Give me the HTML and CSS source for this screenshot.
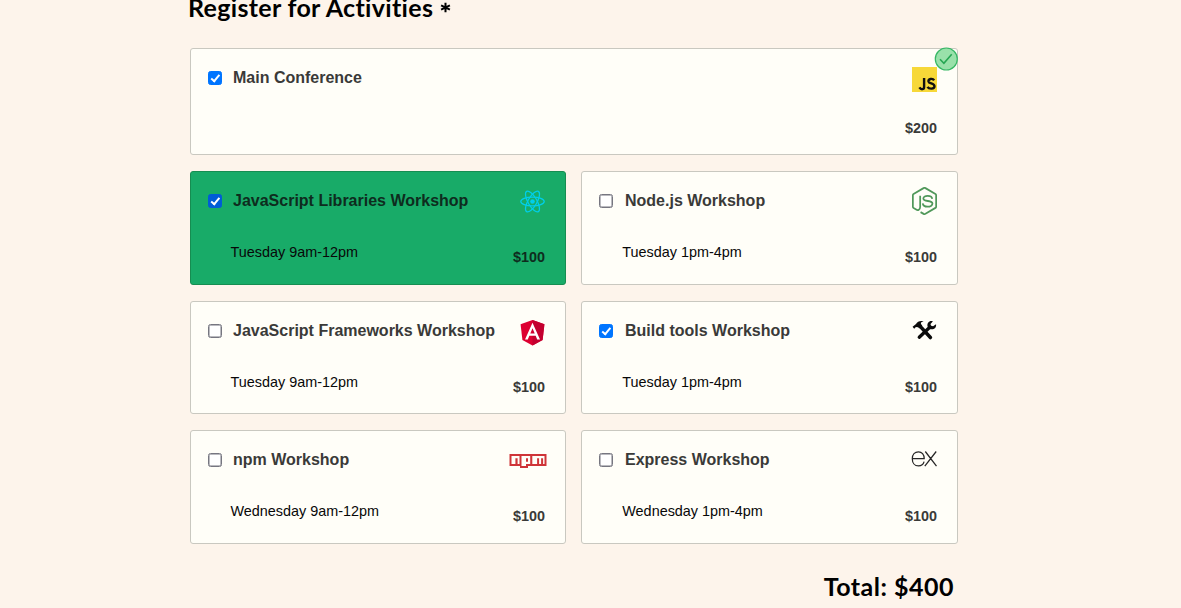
FILE: index.html
```html
<!DOCTYPE html>
<html lang="en">
<head>
<meta charset="utf-8">
<title>Register for Activities</title>
<link rel="stylesheet" href="styles.css">
</head>
<body>
<form class="activities">
  <h2 class="heading"><span>Register for Activities</span> <svg class="star" viewBox="0 0 12 12"><path d="M6 .8v10.4M1.2 3.6l9.6 4.8M10.8 3.6L1.2 8.4"/></svg></h2>
  <div class="grid">
    <label class="card main">
      <input type="checkbox" checked>
      <span class="title">Main Conference</span>
      <svg class="icon js" width="25" height="25" viewBox="0 0 25 25"><path fill="#f7d838" d="M0 0h25v25H0z"/><g fill="none" stroke="#111" stroke-width="2.4"><path d="M12.1 11v9c0 2.8-3.2 2.9-4.7.3"/><path d="M22.1 13.4c-1.3-2.4-6-1.8-5.6 1.1.4 2.4 6 1.6 6 4.8 0 3-5.5 3.1-7 .5"/></g></svg>
      <span class="cost">$200</span>
      <svg class="badge" width="24" height="24" viewBox="0 0 24 24"><circle cx="12.3" cy="12" r="11" fill="#99e1aa" stroke="#37b765" stroke-width="1.2"/><path d="M6 12.2l3.9 4 7.8-8.9" fill="none" stroke="#26a653" stroke-width="1.6"/></svg>
    </label>

    <label class="card focus">
      <input type="checkbox" checked>
      <span class="title">JavaScript Libraries Workshop</span>
      <svg class="icon" width="25" height="25" viewBox="0 0 26 26"><g fill="none" stroke="#00cfeb" stroke-width="1.3"><ellipse cx="13" cy="13" rx="12.2" ry="4.6"/><ellipse cx="13" cy="13" rx="12.2" ry="4.6" transform="rotate(60 13 13)"/><ellipse cx="13" cy="13" rx="12.2" ry="4.6" transform="rotate(120 13 13)"/></g><circle cx="13" cy="13" r="2.4" fill="#00cfeb"/></svg>
      <span class="time">Tuesday 9am-12pm</span>
      <span class="cost">$100</span>
    </label>

    <label class="card">
      <input type="checkbox">
      <span class="title">Node.js Workshop</span>
      <svg class="icon" width="25" height="28" viewBox="0 0 26 28" preserveAspectRatio="none"><g fill="none" stroke="#50985a" stroke-width="1.8" stroke-linejoin="round"><path d="M8.5 8.7v11.1c0 3.5-2.7 3.7-4.2 2.8L1.7 21c-.6-.4-.8-.7-.8-1.3V8.2c0-.6.2-.9.7-1.2L12 1.1c.6-.4 1.3-.4 2 0L24.4 7c.5.3.7.6.7 1.2v11.5c0 .6-.2.9-.7 1.2L14 26.8c-.7.4-1.3.4-1.9.1l-3.2-1.8"/><path d="M21 11.9c-.2-4-9.2-4-9.2-.4 0 3.9 9.5 1.1 9.5 5.1 0 4.1-9.9 4.2-10.1-.2"/></g></svg>
      <span class="time">Tuesday 1pm-4pm</span>
      <span class="cost">$100</span>
    </label>

    <label class="card third">
      <input type="checkbox">
      <span class="title">JavaScript Frameworks Workshop</span>
      <svg class="icon angular" width="25" height="26" viewBox="0 0 26 27"><path fill="#dd0031" d="M13 0L.6 4.4l1.9 16.4L13 26.6l10.5-5.8 1.9-16.4z"/><path fill="#c3002f" d="M13 0v26.6l10.5-5.8 1.9-16.4z"/><path fill="#fff" d="M13 2.9L5.2 20.2h2.9l1.6-3.9h6.6l1.6 3.9h2.9zm0 5.6l2.3 5.4h-4.6z"/></svg>
      <span class="time">Tuesday 9am-12pm</span>
      <span class="cost">$100</span>
    </label>

    <label class="card third">
      <input type="checkbox" checked>
      <span class="title">Build tools Workshop</span>
      <svg class="icon tools" width="25" height="21" viewBox="0 0 26 22"><g fill="none" stroke="#0b0b0b" stroke-linecap="round"><path stroke-width="3.7" d="M9 7.2l10.2 11.2"/><path stroke-width="3.5" d="M7.5 18L18.8 7.3"/></g><path fill="#0b0b0b" d="M.5 7.1L4.1 4.3C5.6 1.8 8.2.5 12.1 1.4 9.8 2 9 2.8 9.3 4.1l1.4 1.7-3.2 3L6.3 7.5 4 7.4 2.2 9.2zM21.8 1.4l-2.5 2.9.4 1.8 2.3.4 3.1-2.1c.6 3.5-2.4 6.2-6 5.2L16.3 7c-1.1-3.6 1.9-6.9 5.5-5.6z"/></svg>
      <span class="time">Tuesday 1pm-4pm</span>
      <span class="cost">$100</span>
    </label>

    <label class="card">
      <input type="checkbox">
      <span class="title">npm Workshop</span>
      <svg class="icon npm" width="38" height="14" viewBox="0 0 38 14"><path fill="#cf3438" d="M.5 0h37v12H19v2h-8v-2H.5z"/><path fill="#fffef8" d="M2.5 2h8v8H8.6V4.3H6.4V10H2.5zM12.5 2h8.7v8H17v2h-4.5zM23.3 2h12.2v8h-1.4V4.3h-2V10h-2V4.3h-2V10h-4.8z"/><path fill="#cf3438" d="M17 4.3h2v3.5h-2z"/></svg>
      <span class="time">Wednesday 9am-12pm</span>
      <span class="cost">$100</span>
    </label>

    <label class="card">
      <input type="checkbox">
      <span class="title">Express Workshop</span>
      <svg class="icon express" width="26" height="16" viewBox="0 0 26 16"><path fill="none" stroke="#262626" stroke-width="1.25" d="M1.5 7.5h11.7C13.2 3.5 10.8.8 7.5.8c-3.7 0-6.2 2.8-6.2 6.9s2.4 7.2 6.1 7.2c3 0 5-1.5 5.7-4.2M14.3.5l11.2 14.7M25.2.5L13.8 15.2"/></svg>
      <span class="time">Wednesday 1pm-4pm</span>
      <span class="cost">$100</span>
    </label>
  </div>
  <p class="total">Total: $400</p>
</form>
</body>
</html>
```
FILE: styles.css
```css
* { box-sizing: border-box; }
body {
  margin: 0;
  height: 608px;
  overflow: hidden;
  background: #fdf4eb;
  font-family: "Liberation Sans", Arial, sans-serif;
}
.activities { width: 768px; margin: 0 0 0 190px; }
.heading {
  display: flex;
  align-items: center;
  gap: 7px;
  height: 32px;
  margin: -9px 0 25px -2px;
  font: 700 25px/32px Lato, sans-serif;
  letter-spacing: .32px;
  white-space: nowrap;
}
.star { width: 11px; height: 11px; fill: none; stroke: #000; stroke-width: 2.2; }
.grid {
  display: grid;
  grid-template-columns: 376px 377px;
  grid-template-rows: 107px 114px 113px 114px;
  column-gap: 15px;
  row-gap: 16px;
}
.card {
  position: relative;
  display: grid;
  grid-template-columns: 14px 1fr auto;
  grid-template-rows: 28px 1fr;
  column-gap: 11px;
  padding: 15px 20px 18px 17px;
  border: 1px solid #c9c8c0;
  border-radius: 3px;
  background: #fffef8;
}
.card:nth-child(odd):not(.main) { column-gap: 12px; }
.main { grid-column: 1 / -1; padding-bottom: 17px; }
.third { padding-bottom: 17px; }
.focus { background: #18ab68; border-color: #168d51; }
.card input {
  appearance: none;
  position: relative;
  width: 14px;
  height: 14px;
  margin: 7px 0 0;
  border: 1.5px solid #767680;
  border-radius: 2.5px;
  background: #fff;
  box-shadow: inset 0 0 0 .5px #767680;
}
.card input:checked { border-color: #0075ff; background: #0075ff; box-shadow: none; }
.focus input:checked { border-color: #005cd6; background: #005cd6; }
.card input:checked::after {
  content: "";
  position: absolute;
  left: 3.5px;
  top: .5px;
  width: 3px;
  height: 6.5px;
  border: solid #fff;
  border-width: 0 2px 2px 0;
  transform: rotate(40deg);
}
.title {
  font-size: 16px;
  font-weight: 700;
  line-height: 27px;
  color: #3a3a38;
  white-space: nowrap;
}
.focus .title, .focus .cost { color: #0e2c1e; }
.icon { align-self: center; justify-self: end; }
.js { margin-top: 2px; }
.angular { margin-top: 3px; }
.tools { margin-top: -2px; }
.npm { margin-right: -2px; margin-top: 2px; }
.express { margin-top: -3px; }
.time {
  grid-column: 1 / 3;
  align-self: end;
  margin-left: 22.5px;
  margin-bottom: 4px;
  font-size: 14.4px;
  line-height: 20px;
  color: #080808;
  white-space: nowrap;
}
.card:nth-child(odd) .time { margin-left: 23.3px; }
.cost {
  grid-column: 3;
  align-self: end;
  justify-self: end;
  font-size: 14.4px;
  font-weight: 700;
  line-height: 18px;
  color: #3a3a38;
}
.badge { position: absolute; right: -1px; top: -2px; }
.total {
  margin: 26px 4px 0 0;
  font: 700 25px/32px Lato, sans-serif;
  letter-spacing: .5px;
  text-align: right;
}
```
